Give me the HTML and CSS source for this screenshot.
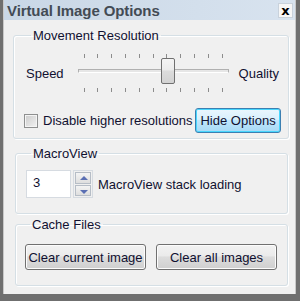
FILE: index.html
```html
<!DOCTYPE html>
<html lang="en">
<head>
    <meta charset="UTF-8">
    <title>Virtual Image Options</title>
    <link rel="stylesheet" href="styles.css">
</head>
<body>

<div class="window">
    <div class="titlebar">
        <span class="title">Virtual Image Options</span>
        <button class="close">x</button>
    </div>

    <div class="content">
        <fieldset class="group group-movement">
            <legend>Movement Resolution</legend>
            <div class="slider-row">
                <span class="slider-label">Speed</span>
                <div class="slider">
                    <div class="ticks">
                        <span></span><span></span><span></span><span></span><span></span><span></span><span></span><span></span><span></span><span></span><span></span>
                    </div>
                    <div class="track">
                        <div class="thumb"></div>
                    </div>
                    <div class="ticks">
                        <span></span><span></span><span></span><span></span><span></span><span></span><span></span><span></span><span></span><span></span><span></span>
                    </div>
                </div>
                <span class="slider-label">Quality</span>
            </div>
            <div class="option-row">
                <label class="check">
                    <span class="checkbox"></span>
                    Disable higher resolutions
                </label>
                <button class="btn btn-default">Hide Options</button>
            </div>
        </fieldset>

        <fieldset class="group group-macro">
            <legend>MacroView</legend>
            <div class="spin-row">
                <div class="spin-input">3</div>
                <div class="spinner">
                    <span class="spin-btn up"></span>
                    <span class="spin-btn down"></span>
                </div>
                <span>MacroView stack loading</span>
            </div>
        </fieldset>

        <fieldset class="group group-cache">
            <legend>Cache Files</legend>
            <div class="btn-row">
                <button class="btn">Clear current image</button>
                <button class="btn">Clear all images</button>
            </div>
        </fieldset>
    </div>
</div>

</body>
</html>
```

FILE: styles.css
```css
* { box-sizing: border-box; }
body {
    margin: 0; width: 300px; height: 301px; overflow: hidden;
    background: #6f6f6f;
    font-family: "Liberation Sans", Arial, sans-serif; font-size: 13px; color: #101030;
}

.window {
    margin-left: 3px; width: 293px; height: 294px;
    background: #f0f0f0;
    border-left: 1px solid #c8c8c8; border-right: 1px solid #c8c8c8;
}

.titlebar {
    height: 20px;
    display: flex; justify-content: space-between; align-items: center;
    padding: 0 2px 0 3px;
    background: linear-gradient(to right, #c9d7e6, #d8e3ef);
}
.title {
    font-size: 15px; font-weight: 700; color: #434b55; letter-spacing: -0.1px;
}
.close {
    width: 15px; height: 15px; padding: 0;
    border: 1px solid #c9d2dc; background: #f7f7f7;
    font-family: "DejaVu Sans", sans-serif;
    font-size: 13px; font-weight: 700; line-height: 11px; color: #000;
}

.content { padding: 8px 7px 0 9px; }

.group {
    margin: 0; padding: 0 10px;
    border: 1px solid #d5dfe5; border-radius: 3px;
    box-shadow: inset 1px 1px 0 #fff, 1px 1px 0 #fff;
}
.group legend { padding: 0 2px; margin-left: 5px; line-height: 15px; }

.group-movement { height: 111px; margin-right: 2px; padding: 0 9px 0 12px; }
.group-macro { height: 68px; margin: 7px 0 0 2px; padding-left: 10px; }
.group-cache { height: 69px; margin: 3px 0 0 2px; padding-left: 9px; }

/* slider */
.slider-row { display: flex; align-items: center; margin-top: 11px; }
.slider-label { line-height: 15px; }
.slider { width: 151px; margin: 0 10px 0 14px; }
.ticks { display: flex; justify-content: space-between; padding: 0 6px; height: 4px; }
.ticks span { display: block; width: 1px; height: 4px; background: #8c8c8c; }
.track {
    position: relative; height: 4px; margin: 11px 0 15px;
    border: 1px solid #b0b0b0; border-bottom-color: #fff; background: #e6e6e6;
}
.thumb {
    position: absolute; left: 82px; top: -12px; width: 14px; height: 26px;
    border: 1px solid #707070; border-radius: 2px;
    background: linear-gradient(#f4f4f4, #ececec 45%, #dcdcdc 50%, #d2d2d2);
}

.option-row {
    display: flex; justify-content: space-between; align-items: center;
    margin-top: 16px; margin-left: -2px; margin-right: -2px;
}
.check { display: flex; align-items: center; gap: 5px; }
.checkbox {
    width: 14px; height: 14px; border: 1px solid #8e8f8f;
    background: linear-gradient(135deg, #cbcbcb, #f2f2f2);
    box-shadow: inset 0 0 0 1px #f4f4f4;
}

.btn {
    font-family: inherit; font-size: 13px; color: #101030;
    height: 26px; padding: 0 8px;
    border: 1px solid #707070; border-radius: 3px;
    background: linear-gradient(#f2f2f2, #ebebeb 45%, #dddddd 50%, #cfcfcf);
    box-shadow: inset 0 0 0 1px #fcfcfc;
}
.btn-default {
    width: 86px; height: 25px; padding: 0;
    border-color: #3c7fb1;
    background: linear-gradient(#eaf6fd, #d9f0fc 45%, #bee6fd 50%, #a7d9f5);
    box-shadow: inset 0 0 0 1px #48d6fd;
}

/* macroview */
.spin-row { display: flex; align-items: center; margin-top: 9px; }
.spin-input {
    width: 45px; height: 28px; padding: 4px 0 0 6px;
    border: 1px solid #d6dbe1; background: #fff;
}
.spinner {
    display: flex; flex-direction: column; gap: 1px;
    width: 20px; height: 28px; margin: 0 5px 0 2px;
    border: 1px solid #d6dbe1; padding: 1px;
}
.spin-btn {
    flex: 1; position: relative;
    border: 1px solid #b6bdc6;
    background: linear-gradient(#f4f4f4, #dedede);
}
.spin-btn::after {
    content: ""; position: absolute; left: 4px;
    border-left: 4px solid transparent; border-right: 4px solid transparent;
}
.spin-btn.up::after { top: 3px; border-bottom: 4px solid #5a6fb3; }
.spin-btn.down::after { top: 4px; border-top: 4px solid #5a6fb3; }

/* cache */
.btn-row { display: flex; gap: 10px; margin-top: 12px; }
.btn-row .btn { width: 121px; padding: 0; }
```
